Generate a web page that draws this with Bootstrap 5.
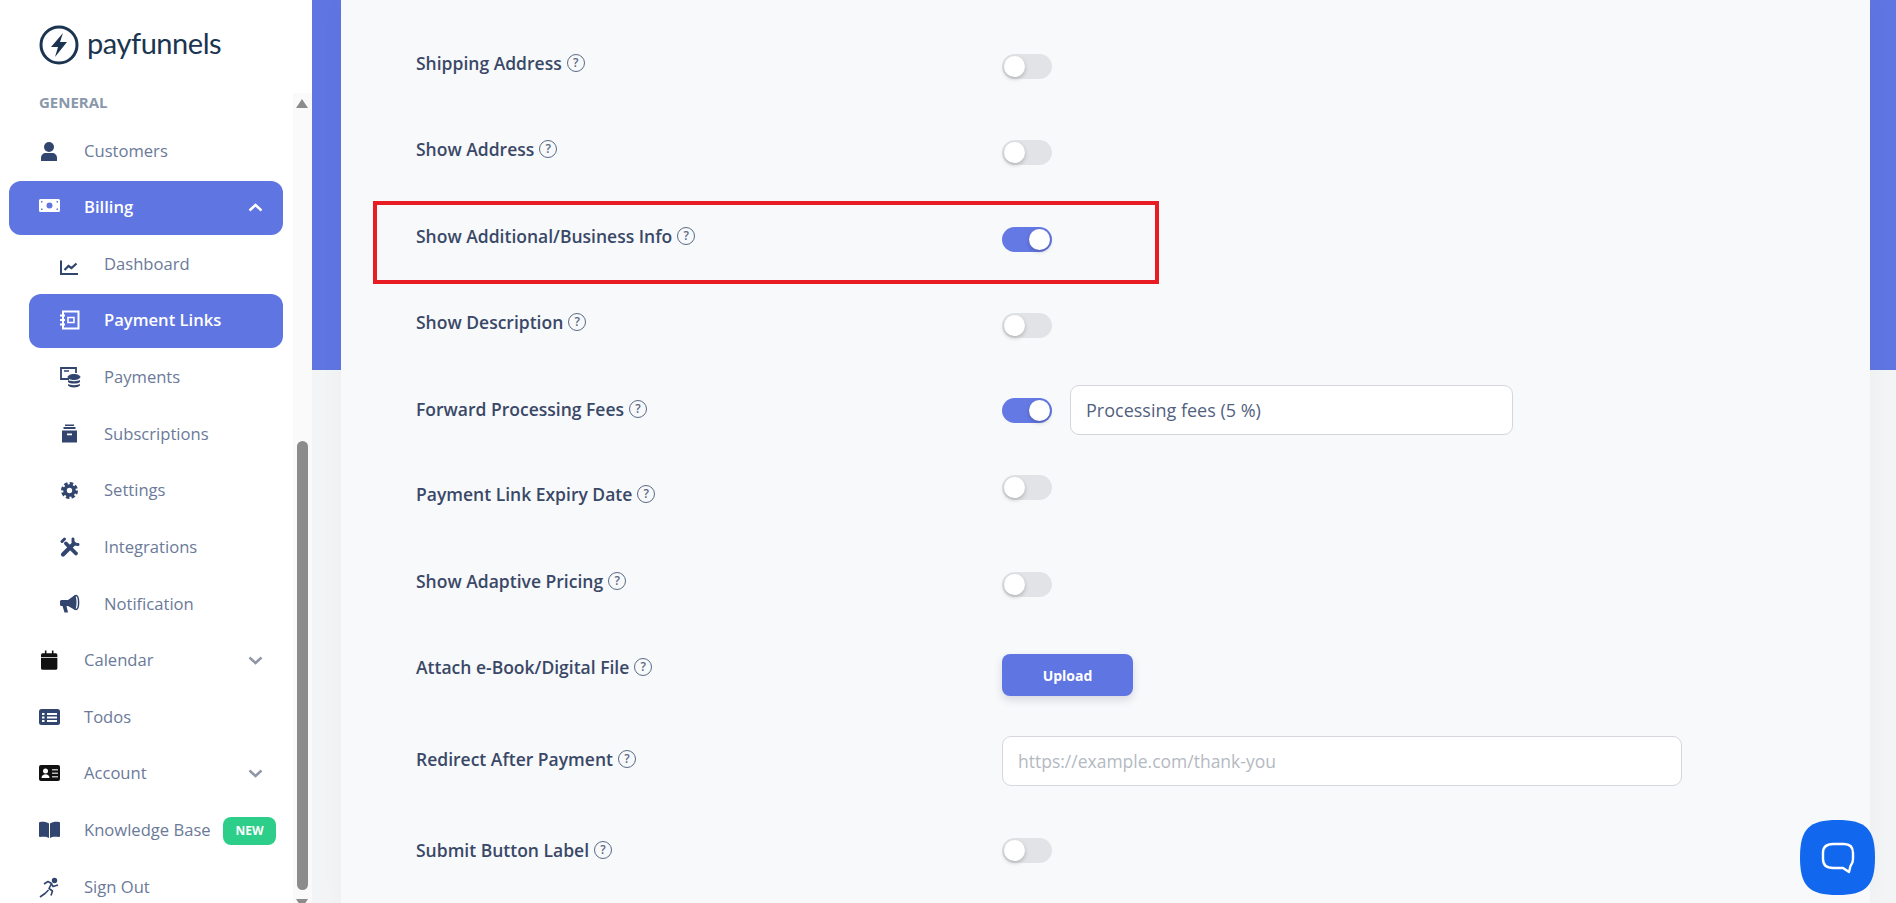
<!DOCTYPE html>
<html lang="en">
<head>
    <meta charset="UTF-8">
    <meta name="viewport" content="width=device-width, initial-scale=1.0">
    <title>Payment Links - payfunnels</title>
    <link href="https://cdn.jsdelivr.net/npm/bootstrap@5.3.0/dist/css/bootstrap.min.css" rel="stylesheet">
    <style>
        :root {
            --pf-blue: #5f75e2;
            --pf-text: #6b7a99;
            --pf-label: #3a4867;
            --pf-icon: #32456e;
        }
        html, body { height: 903px; overflow: hidden; }
        body { font-family: "Open Sans", "Liberation Sans", sans-serif; background: #f4f5f7; }
        .side-col { width: 312px; height: 903px; background: #fff; flex: none; position: relative; overflow: hidden; }
        .brand-box { height: 90px; padding-left: 39px; padding-top: 25px; gap: 8px; }
        .brand-name { font-family: Lato, sans-serif; font-size: 29px; line-height: 36px; color: #1b3550; letter-spacing: -.45px; }
        .side-head { font-size: 15px; font-weight: 700; color: #8a98ac; padding-left: 39px; line-height: 24px; margin-bottom: 10px; }
        .side-list { gap: 2.63px; }
        .side-item { height: 54px; width: 274px; margin-left: 9px; padding-left: 30px; padding-right: 20px; border-radius: 12px; color: var(--pf-text); font-size: 16.6px; text-decoration: none; }
        .side-sub { width: 254px; margin-left: 29px; padding-left: 31px; }
        .side-item.is-on { background: var(--pf-blue); color: #fff; font-weight: 600; }
        .side-ico { width: 45px; flex: none; display: flex; color: var(--pf-icon); }
        .side-sub .side-ico { width: 44px; }
        .side-ico svg { width: 21px; height: 21px; overflow: visible; }
        .is-on .side-ico { color: #fff; }
        .side-ico.ico-black { color: #111; }
        .side-chev { margin-left: auto; width: 15px; height: 9px; color: #8d97a5; }
        .is-on .side-chev { color: #fff; }
        .new-tag { margin-left: auto; margin-right: -13px; width: 53px; height: 28px; border-radius: 8px; background: #2dce89; color: #fff; font-size: 12px; font-weight: 700; }
        .bar-track { position: absolute; left: 293px; top: 93px; width: 19px; bottom: 0; background: #fafafa; }
        .bar-thumb { position: absolute; left: 4px; top: 348px; width: 11px; height: 449px; border-radius: 6px; background: #8c8c8c; }
        .bar-up, .bar-down { position: absolute; left: 3px; width: 0; height: 0; border-left: 6.5px solid transparent; border-right: 6.5px solid transparent; }
        .bar-up { top: 6px; border-bottom: 9px solid #8c8c8c; }
        .bar-down { bottom: -5px; border-top: 9px solid #8c8c8c; }
        .main-col { height: 903px; background: linear-gradient(var(--pf-blue) 370px, #f3f4f6 370px); padding-left: 29px; padding-right: 26px; overflow: hidden; }
        .form-panel { background: #f8f9fb; height: 903px; padding: 51px 0 0 75px; box-shadow: 0 0 24px rgba(0,0,0,.03); }
        .set-row { display: flex; align-items: flex-start; position: relative; }
        .set-label { width: 586px; flex: none; font-size: 17.5px; font-weight: 600; line-height: 24px; color: var(--pf-label); gap: 5px; }
        .q-mark { width: 18px; height: 18px; border: 1.5px solid #5b6a85; border-radius: 50%; font-size: 12px; line-height: 1; font-weight: 600; color: #5b6a85; }
        .set-gap-86 { height: 86px; }
        .set-gap-87 { height: 87px; }
        .set-gap-85 { height: 85px; }
        .set-gap-92 { height: 92px; }
        .set-gap-91 { height: 91px; }
        .set-toggle.form-check-input { width: 50px; height: 25px; margin: 3px 0 0; border: 0; border-radius: 13px; background: #e2e3e6 none; position: relative; box-shadow: none; flex: none; }
        .set-toggle.form-check-input::after { content: ""; position: absolute; left: 2px; top: 2px; width: 21px; height: 21px; border-radius: 50%; background: #fff; box-shadow: 0 2px 4px rgba(0,0,0,.22); }
        .set-toggle.form-check-input:checked { background: #6579e5 none; }
        .set-toggle.form-check-input:checked::after { left: 27px; }
        .up-7 { margin-top: -7px !important; }
        .up-0 { margin-top: 0 !important; }
        .box-fees { margin-top: -12px; gap: 18px; align-items: center; }
        .box-fees .set-toggle { margin-top: 0; }
        .set-input.form-control { height: 50px; border: 1px solid #d5d7dc; border-radius: 9px; font-size: 18px; font-weight: 500; color: #525f7f; padding: 0 15px; background: #fff; }
        .set-input.form-control::placeholder { color: #b4b9c2; font-weight: 400; font-size: 17.5px; }
        .input-fees { width: 443px; }
        .input-url { width: 680px; margin-top: -11px; }
        .btn-upload.btn { width: 131px; height: 42px; margin-top: -1px; background: var(--pf-blue); border: 0; border-radius: 8px; color: #fff; font-size: 14px; font-weight: 700; box-shadow: 0 4px 8px rgba(50,50,93,.16); }
        .red-mark { position: absolute; left: -43px; top: -23px; width: 786px; height: 83px; border: 4px solid #e81c23; pointer-events: none; }
        .chat-btn { position: absolute; left: 1800px; top: 820px; width: 75px; height: 75px; }
    </style>
</head>
<body>
    <div class="d-flex">
        <aside class="side-col">
            <div class="brand-box d-flex">
                <svg width="40" height="40" viewBox="0 0 40 40">
                    <circle cx="20" cy="20" r="18" fill="none" stroke="#1b3550" stroke-width="3"/>
                    <path d="M24 8 12 22h7l-3 10 12-15h-7z" fill="#1b3550"/>
                </svg>
                <span class="brand-name">payfunnels</span>
            </div>
            <div class="side-head">GENERAL</div>
            <nav class="side-list d-flex flex-column">
                <a class="side-item d-flex align-items-center" href="#">
                    <span class="side-ico"><svg viewBox="0 0 21 21" fill="currentColor"><circle cx="10" cy="6" r="5"/><path d="M2 20v-3c0-3 2-5 5-5h6c3 0 5 2 5 5v3z"/></svg></span>Customers
                </a>
                <a class="side-item is-on d-flex align-items-center" href="#">
                    <span class="side-ico"><svg viewBox="0 0 21 21"><path fill="currentColor" fill-rule="evenodd" d="M1.500 2h18a1.500 1.500 0 0 1 1.500 1.500v10a1.500 1.500 0 0 1-1.500 1.500h-18A1.500 1.500 0 0 1 0 13.500v-10A1.500 1.500 0 0 1 1.500 2zm9 3.500a3 3 0 1 0 0 6 3 3 0 0 0 0-6zM2 4v1.500h1.500V4zm15.500 0v1.500H19V4zM2 11.500V13h1.500v-1.500zm15.500 0V13H19v-1.500z"/></svg></span>Billing
                    <svg class="side-chev" viewBox="0 0 15 9" fill="none" stroke="currentColor" stroke-width="2.400"><path d="m1.500 7.500 6-5.500 6 5.500"/></svg>
                </a>
                <a class="side-item side-sub d-flex align-items-center" href="#">
                    <span class="side-ico"><svg viewBox="0 0 21 21" fill="none" stroke="currentColor" stroke-width="2"><path d="M1 6.500v13.500h17"/><path stroke-width="2.200" d="m4.500 16 4-4 3 2 5-4.500"/></svg></span>Dashboard
                </a>
                <a class="side-item side-sub is-on d-flex align-items-center" href="#">
                    <span class="side-ico"><svg viewBox="0 0 21 21" fill="none" stroke="currentColor" stroke-width="2"><path d="M3 1.500h15.500v17H3z"/><path stroke-width="1.600" d="M8 7.500h6v5H8z"/><path d="M0 5.500h5M0 10h5M0 14.500h5"/></svg></span>Payment Links
                </a>
                <a class="side-item side-sub d-flex align-items-center" href="#">
                    <span class="side-ico"><svg viewBox="0 0 21 21" fill="none" stroke="currentColor"><path stroke-width="1.800" d="M9 12H1V1h15v5"/><path stroke-width="1.500" d="M4 4h5"/><ellipse cx="14" cy="10" rx="6" ry="2.500" fill="currentColor"/><path fill="currentColor" stroke="none" d="M8 13c2 1.500 10 1.500 12 0v2c-2 2-10 2-12 0zm0 4c2 1.500 10 1.500 12 0v1.500c-2 2.500-10 2.500-12 0z"/></svg></span>Payments
                </a>
                <a class="side-item side-sub d-flex align-items-center" href="#">
                    <span class="side-ico"><svg viewBox="0 0 21 21" fill="currentColor"><path fill-rule="evenodd" d="M5 .5h9V2H5zM3.500 3h12v2h-12zM2 6.500h15v12H2zm5 3v1.800h5V9.500z"/></svg></span>Subscriptions
                </a>
                <a class="side-item side-sub d-flex align-items-center" href="#">
                    <span class="side-ico"><svg viewBox="0 0 21 21" fill="none" stroke="currentColor"><circle cx="9.500" cy="10.500" r="4.500" stroke-width="3.600"/><circle cx="9.500" cy="10.500" r="7" stroke-width="3" stroke-dasharray="3.400 2.100"/></svg></span>Settings
                </a>
                <a class="side-item side-sub d-flex align-items-center" href="#">
                    <span class="side-ico"><svg viewBox="0 0 21 21" fill="none" stroke="currentColor" stroke-linecap="round"><path stroke-width="4.200" d="m3 17.500 10.500-10.500"/><path stroke-width="3" d="M13 2a4.500 4.500 0 0 0 5 5.500"/><path stroke-width="3.800" d="m6 6.500 10 10"/><path stroke-width="3" d="m2 4.500 2.500-2.500"/></svg></span>Integrations
                </a>
                <a class="side-item side-sub d-flex align-items-center" href="#">
                    <span class="side-ico"><svg viewBox="0 0 21 21" fill="currentColor"><path d="M1.500 6H8l7-5c2 3 2 12 0 15l-7-4H6.500L8 18.500H4.500L2.500 12h-1A1.500 1.500 0 0 1 0 10.500v-3A1.500 1.500 0 0 1 1.500 6z"/><ellipse cx="16" cy="8.500" rx="2.600" ry="7" fill="none" stroke="currentColor" stroke-width="1.500"/></svg></span>Notification
                </a>
                <a class="side-item d-flex align-items-center" href="#">
                    <span class="side-ico ico-black"><svg viewBox="0 0 21 21" fill="currentColor"><path d="M5 0h2v3h7V0h2v3h3a2 2 0 0 1 2 2v2H0V5a2 2 0 0 1 2-2h3zM0 8h21v11a2 2 0 0 1-2 2H2a2 2 0 0 1-2-2z" transform="translate(2 .5) scale(.78 .92)"/></svg></span>Calendar
                    <svg class="side-chev" viewBox="0 0 15 9" fill="none" stroke="currentColor" stroke-width="2.400"><path d="m1.500 1.500 6 5.500 6-5.500"/></svg>
                </a>
                <a class="side-item d-flex align-items-center" href="#">
                    <span class="side-ico"><svg viewBox="0 0 21 21"><rect y="2" width="21" height="16" rx="2.500" fill="currentColor"/><path fill="#fff" d="M3 6h2.500v2H3zm5 0h10v2H8zM3 9.500h2.500v2H3zm5 0h10v2H8zM3 13h2.500v2H3zm5 0h10v2H8z"/></svg></span>Todos
                </a>
                <a class="side-item d-flex align-items-center" href="#">
                    <span class="side-ico ico-black"><svg viewBox="0 0 21 21"><rect y="2" width="21" height="16" rx="2" fill="currentColor"/><circle cx="6.500" cy="8" r="2.500" fill="#fff"/><path fill="#fff" d="M2.500 15c0-5 8-5 8 0z"/><path fill="#b9b9b9" d="M13 6h6v1.500h-6zm0 3.500h6V11h-6zm0 3.500h6v1.500h-6z"/></svg></span>Account
                    <svg class="side-chev" viewBox="0 0 15 9" fill="none" stroke="currentColor" stroke-width="2.400"><path d="m1.500 1.500 6 5.500 6-5.500"/></svg>
                </a>
                <a class="side-item d-flex align-items-center" href="#">
                    <span class="side-ico"><svg viewBox="0 0 21 21" fill="currentColor"><path d="M1 2c3-.5 7 0 9 1.500V18c-2-1.500-6-1.500-9-1a1 1 0 0 1-1-1V3a1 1 0 0 1 1-1zm19 0c-3-.5-7 0-9 1.500V18c2-1.500 6-1.500 9-1a1 1 0 0 0 1-1V3a1 1 0 0 0-1-1z"/></svg></span>Knowledge Base
                    <span class="new-tag d-flex align-items-center justify-content-center">NEW</span>
                </a>
                <a class="side-item d-flex align-items-center" href="#">
                    <span class="side-ico"><svg viewBox="0 0 21 21" fill="none" stroke="currentColor" stroke-width="1.600" stroke-linejoin="round"><circle cx="15.500" cy="3.500" r="2.700" fill="currentColor" stroke="none"/><path d="M5 7 9 4.500l3.500 2-2.500 5 3.500 2.500-1.500 4.500"/><path d="M9.500 13 6 16.500 1 20"/><path d="m12.500 7 1.500 2.500 5-1.500"/></svg></span>Sign Out
                </a>
            </nav>
            <div class="bar-track">
                <div class="bar-up"></div>
                <div class="bar-thumb"></div>
                <div class="bar-down"></div>
            </div>
        </aside>

        <main class="main-col flex-grow-1">
            <div class="form-panel">
                <div class="set-row set-gap-86">
                    <div class="set-label d-flex"><span>Shipping Address</span><span class="q-mark d-inline-flex align-items-center justify-content-center align-self-center">?</span></div>
                    <input class="form-check-input set-toggle" type="checkbox">
                </div>
                <div class="set-row set-gap-87">
                    <div class="set-label d-flex"><span>Show Address</span><span class="q-mark d-inline-flex align-items-center justify-content-center align-self-center">?</span></div>
                    <input class="form-check-input set-toggle" type="checkbox">
                </div>
                <div class="set-row set-gap-86">
                    <div class="red-mark"></div>
                    <div class="set-label d-flex"><span>Show Additional/Business Info</span><span class="q-mark d-inline-flex align-items-center justify-content-center align-self-center">?</span></div>
                    <input class="form-check-input set-toggle" type="checkbox" checked>
                </div>
                <div class="set-row set-gap-87">
                    <div class="set-label d-flex"><span>Show Description</span><span class="q-mark d-inline-flex align-items-center justify-content-center align-self-center">?</span></div>
                    <input class="form-check-input set-toggle" type="checkbox">
                </div>
                <div class="set-row set-gap-85">
                    <div class="set-label d-flex"><span>Forward Processing Fees</span><span class="q-mark d-inline-flex align-items-center justify-content-center align-self-center">?</span></div>
                    <div class="box-fees d-flex">
                        <input class="form-check-input set-toggle" type="checkbox" checked>
                        <input class="form-control set-input input-fees" type="text" value="Processing fees (5 %)">
                    </div>
                </div>
                <div class="set-row set-gap-87">
                    <div class="set-label d-flex"><span>Payment Link Expiry Date</span><span class="q-mark d-inline-flex align-items-center justify-content-center align-self-center">?</span></div>
                    <input class="form-check-input set-toggle up-7" type="checkbox">
                </div>
                <div class="set-row set-gap-86">
                    <div class="set-label d-flex"><span>Show Adaptive Pricing</span><span class="q-mark d-inline-flex align-items-center justify-content-center align-self-center">?</span></div>
                    <input class="form-check-input set-toggle" type="checkbox">
                </div>
                <div class="set-row set-gap-92">
                    <div class="set-label d-flex"><span>Attach e-Book/Digital File</span><span class="q-mark d-inline-flex align-items-center justify-content-center align-self-center">?</span></div>
                    <button class="btn btn-upload" type="button">Upload</button>
                </div>
                <div class="set-row set-gap-91">
                    <div class="set-label d-flex"><span>Redirect After Payment</span><span class="q-mark d-inline-flex align-items-center justify-content-center align-self-center">?</span></div>
                    <input class="form-control set-input input-url" type="text" placeholder="https://example.com/thank-you">
                </div>
                <div class="set-row set-gap-86">
                    <div class="set-label d-flex"><span>Submit Button Label</span><span class="q-mark d-inline-flex align-items-center justify-content-center align-self-center">?</span></div>
                    <input class="form-check-input set-toggle up-0" type="checkbox">
                </div>
            </div>
        </main>
    </div>

    <div class="chat-btn">
        <svg width="75" height="75" viewBox="0 0 75 75">
            <path fill="#1168ee" d="M37.500 0C66 0 75 9 75 37.500S66 75 37.500 75 0 66 0 37.500 9 0 37.500 0z"/>
            <path fill="none" stroke="#fff" stroke-width="2.400" stroke-linejoin="round" d="M33 24h11c6 0 9 3 9 9v6c0 3-.8 5-2.500 7L49 52l-6-4H33c-6 0-10-3-10-9v-6c0-6 4-9 10-9z"/>
        </svg>
    </div>

    <script src="https://cdn.jsdelivr.net/npm/bootstrap@5.3.0/dist/js/bootstrap.bundle.min.js"></script>
</body>
</html>
